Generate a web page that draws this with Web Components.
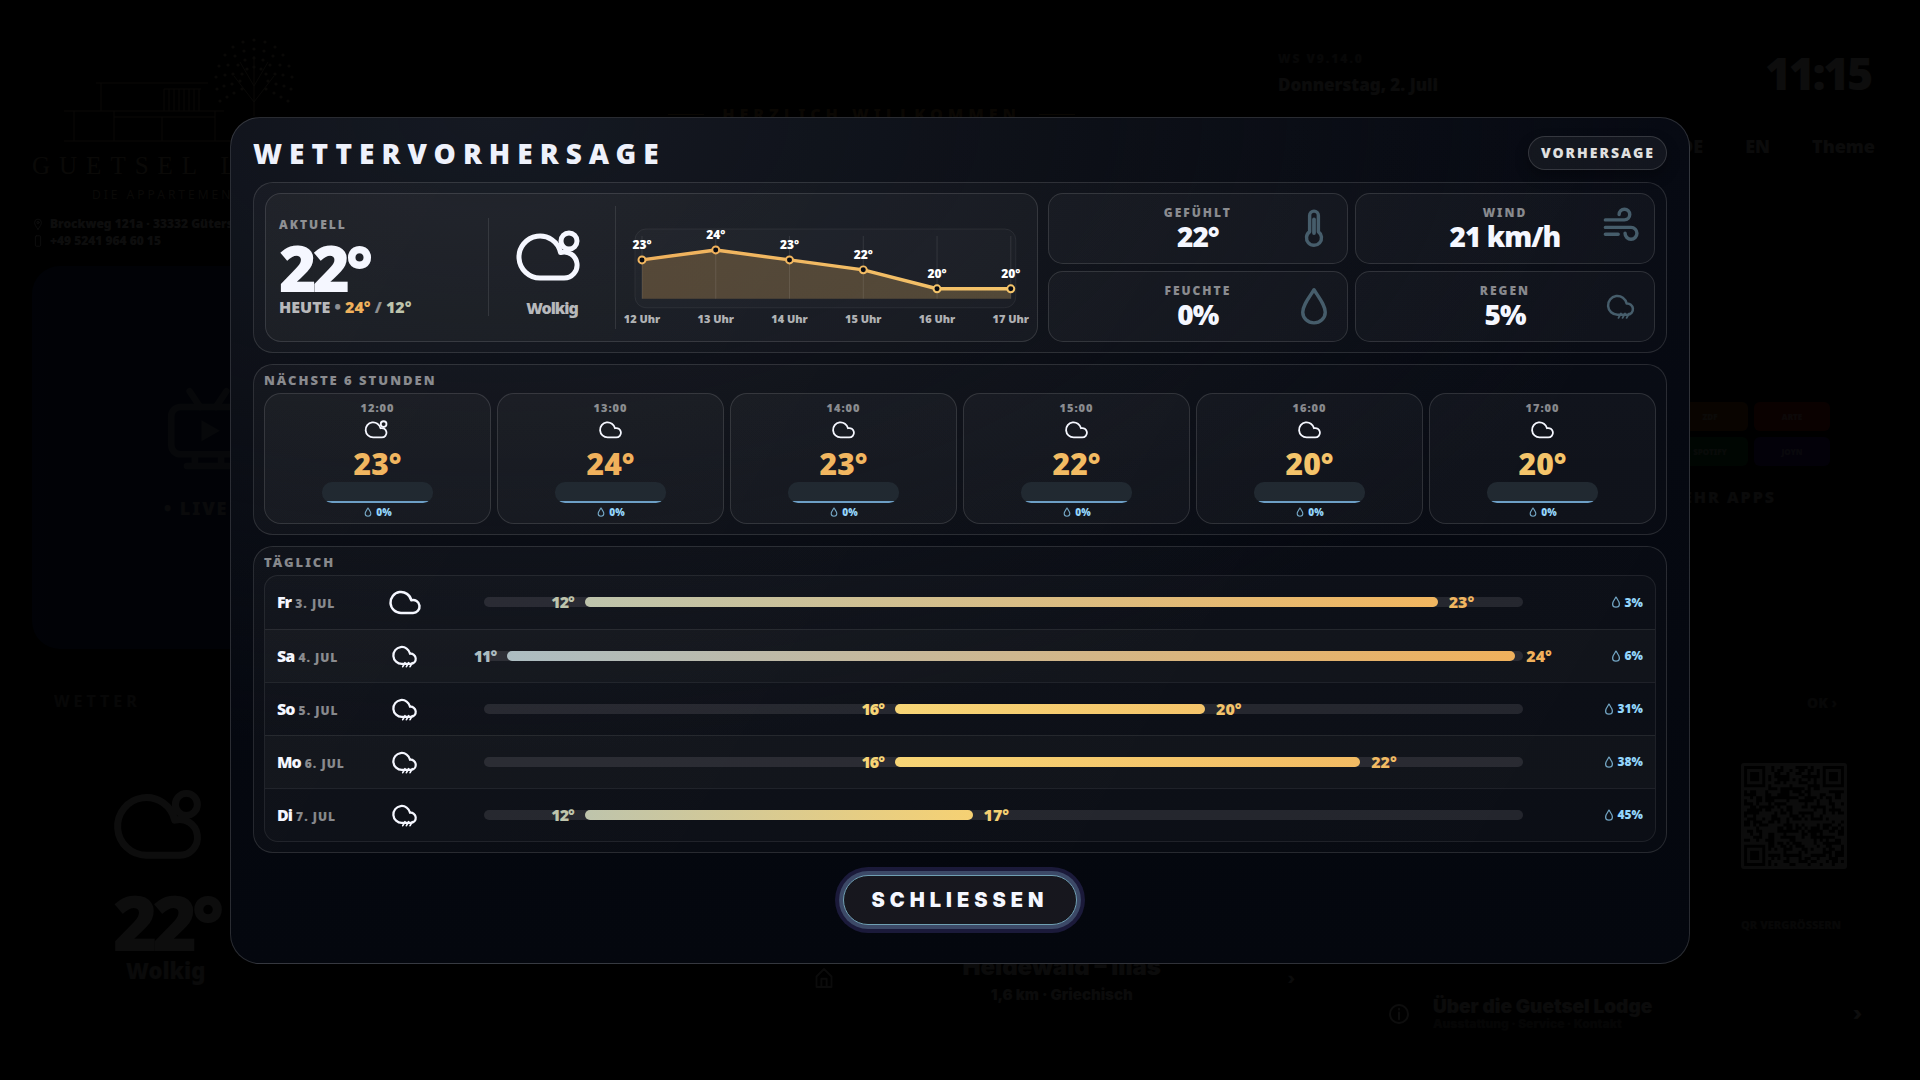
<!DOCTYPE html>
<html lang="de">
<head>
<meta charset="utf-8">
<meta name="viewport" content="width=device-width, initial-scale=1">
<title>Wettervorhersage</title>
<style>
  * { box-sizing: border-box; }
  body {
    margin: 0;
    min-height: 100vh;
    background: #000;
    color: #f5f7ff;
    font-family: "Noto Sans", "Open Sans", sans-serif;
    font-weight: 900;
  }
</style>
</head>
<body>
<lodge-app></lodge-app>

<script>
const CLOUD = 'M24 54A21 21 0 1 1 44.5 28.5A13 13 0 1 1 48 54Z'

const ICONS = {
  cloud: `<path d="${CLOUD}"/>`,
  partly: `<g transform="translate(-4 0)"><path d="${CLOUD}"/><circle cx="53" cy="17" r="8"/></g>`,
  rain: `
    <path stroke-width="4" d="M26.5 46A15 15 0 1 1 41 28A9 9 0 1 1 43 46Z"/>
    <path stroke-width="3" d="M32 44l-4 7M38.5 44l-4 7M45 44l-4 7"/>`,
  drop: '<path d="M32 6C23 20 14 31 14 42a18 17 0 0 0 36 0C50 31 41 20 32 6Z"/>',
  thermo: '<path d="M25 38V12a7 7 0 0 1 14 0v26a12 12 0 1 1-14 0Z"/><path d="M32 18V40" stroke-width="6"/>',
  wind: '<path d="M7 19H37.5a8.5 8.5 0 1 0-8.5-8.5M7 31H48a9.5 9.5 0 1 1-9.5 9.5M7 42H27.5"/>',
  tv: '<rect x="4" y="16" width="56" height="36" rx="7"/><path d="M18 4l8 12M46 4l-8 12M22 52v9M42 52v9M16 61h32"/><path d="M27 26v16l14-8z" fill="currentColor" stroke="none"/>',
  house: '<path d="M12 28L32 8l20 20v28H12zM25 56V34h14v22"/>',
  info: '<circle cx="32" cy="32" r="24"/><path d="M32 28v18M32 18v2"/>',
  pin: '<path d="M32 60C20 44 14 34 14 24a18 18 0 0 1 36 0c0 10-6 20-18 36z"/><circle cx="32" cy="24" r="6"/>',
  phone: '<rect x="18" y="4" width="28" height="56" rx="6"/>',
}

// temperature -> colour, cool grey-blue through yellow to orange
const TEMP_COLOURS = [
  [11, [172, 189, 194]],
  [12, [190, 196, 172]],
  [16, [247, 213, 118]],
  [20, [244, 196, 106]],
  [24, [240, 177, 92]],
]

const tempColour = t => {
  let i = 0
  while (i < TEMP_COLOURS.length - 2 && t > TEMP_COLOURS[i + 1][0]) i++
  const [t0, c0] = TEMP_COLOURS[i]
  const [t1, c1] = TEMP_COLOURS[i + 1]
  const f = Math.min(1, Math.max(0, (t - t0) / (t1 - t0)))
  return `rgb(${c0.map((c, n) => Math.round(c + (c1[n] - c) * f)).join(',')})`
}

class BaseElement extends HTMLElement {
  constructor() {
    super()
    this.attachShadow({ mode: 'open' })
  }
  connectedCallback() {
    this.shadowRoot.innerHTML = `
      <style>
        *, :host { box-sizing: border-box; }
        ${this.css}
      </style>
      ${this.html}
    `
  }
  attr(name) {
    return this.getAttribute(name) || ''
  }
  num(name) {
    return Number(this.getAttribute(name)) || 0
  }
}

class WeatherIcon extends BaseElement {
  get css() {
    return `
      :host { display: block; width: var(--size, 24px); height: var(--size, 24px); flex: none; }
      svg { display: block; width: 100%; height: 100%; overflow: visible; }
    `
  }
  get html() {
    return `
      <svg viewBox="0 0 64 64" fill="none" stroke="currentColor" stroke-width="${this.attr('stroke') || 5}"
        stroke-linecap="round" stroke-linejoin="round" aria-hidden="true">${ICONS[this.attr('name')]}</svg>
    `
  }
}

class WeatherPanel extends BaseElement {
  get css() {
    return `
      :host {
        display: block;
        padding: 10px;
        border: 1px solid rgba(255, 255, 255, .12);
        border-radius: 20px;
        background: linear-gradient(120deg, rgba(255, 250, 240, .03), rgba(255, 255, 255, .015));
      }
      h2 {
        margin: 0 0 8px;
        font-size: 13px;
        line-height: 10px;
        font-weight: 900;
        letter-spacing: 2px;
        color: rgba(255, 255, 255, .5);
      }
    `
  }
  get html() {
    return `${this.attr('heading') ? `<h2>${this.attr('heading')}</h2>` : ''}<slot></slot>`
  }
}

class TempChart extends BaseElement {
  get css() {
    return `
      :host { display: block; }
      svg { display: block; width: 100%; overflow: visible; }
      .temp { font-size: 12px; fill: #fff; text-anchor: middle; }
      .hour { font-size: 11px; fill: rgba(255, 255, 255, .68); text-anchor: middle; }
    `
  }
  get html() {
    const temps = this.attr('temps').split(',').map(Number)
    const first = this.num('first-hour')
    const points = temps.map((t, i) => ({ t, x: 8 + i * 74, y: Math.round(22 + (24 - t) * 9.8), hour: first + i }))
    const line = points.map(p => `${p.x},${p.y}`).join(' ')
    const last = points[points.length - 1]
    return `
      <svg viewBox="0 0 384 96" role="img" aria-label="Temperaturverlauf">
        <defs>
          <linearGradient id="line" x1="0" x2="1" y1="0" y2="0">
            <stop offset="0" stop-color="${tempColour(24)}"/>
            <stop offset="1" stop-color="${tempColour(20)}"/>
          </linearGradient>
        </defs>
        <rect x="1" y="1" width="382" height="79" rx="11" fill="rgba(255,255,255,.02)" stroke="rgba(255,255,255,.07)"/>
        <polygon points="8,71 ${line} ${last.x},71" fill="url(#line)" fill-opacity=".25"/>
        ${points.map(p => `<path d="M${p.x} 8V71" stroke="rgba(255,255,255,.1)"/>`).join('')}
        <polyline points="${line}" fill="none" stroke="url(#line)" stroke-width="3.5" stroke-linejoin="round"/>
        ${points.map(p => `
          <circle cx="${p.x}" cy="${p.y}" r="3.5" fill="#070a12" stroke="${tempColour(p.t)}" stroke-width="2"/>
          <text class="temp" x="${p.x}" y="${p.y - 11}">${p.t}°</text>
          <text class="hour" x="${p.x}" y="95">${p.hour} Uhr</text>
        `).join('')}
      </svg>
    `
  }
}

class CurrentCard extends BaseElement {
  get css() {
    return `
      :host {
        display: grid;
        grid-template-columns: 222px 127px 1fr;
        align-items: center;
        border: 1px solid rgba(255, 255, 255, .12);
        border-radius: 16px;
        background: linear-gradient(120deg, rgba(255, 246, 228, .035), rgba(255, 255, 255, .03));
      }
      .now { padding: 1px 0 0 13px; height: 98px; }
      .label { font-size: 12px; line-height: 12px; letter-spacing: 2px; color: rgba(255, 255, 255, .5); }
      .temp { margin-top: 10px; font-size: 64px; line-height: 54px; letter-spacing: -4px; }
      .today { margin-top: 4px; font-size: 16px; line-height: 16px; color: rgba(255, 255, 255, .7); white-space: nowrap; }
      .sep { color: rgba(255, 255, 255, .5); }
      .sky {
        display: flex;
        flex-direction: column;
        align-items: center;
        gap: 10px;
        height: 98px;
        padding-top: 6px;
        border-left: 1px solid rgba(255, 255, 255, .1);
      }
      .sky weather-icon { --size: 64px; }
      .sky span { font-size: 16px; line-height: 20px; letter-spacing: -1px; color: rgba(255, 255, 255, .7); }
      .chart {
        display: flex;
        align-items: center;
        height: 123px;
        padding: 17px 20px 0 18px;
        border-left: 1px solid rgba(255, 255, 255, .1);
      }
      ::slotted(temp-chart) { flex: 1; }
    `
  }
  get html() {
    return `
      <div class="now">
        <div class="label">AKTUELL</div>
        <div class="temp">${this.attr('temp')}°</div>
        <div class="today">HEUTE <span class="sep">•</span>
          <span style="color:${tempColour(this.num('high'))}">${this.attr('high')}°</span>
          <span class="sep">/</span>
          <span style="color:${tempColour(this.num('low'))}">${this.attr('low')}°</span></div>
      </div>
      <div class="sky">
        <weather-icon name="partly"></weather-icon>
        <span>${this.attr('sky')}</span>
      </div>
      <div class="chart"><slot></slot></div>
    `
  }
}

class MetricCard extends BaseElement {
  get css() {
    return `
      :host {
        position: relative;
        display: flex;
        flex-direction: column;
        justify-content: center;
        align-items: center;
        gap: 2px;
        padding: 2px 0 0;
        border: 1px solid rgba(255, 255, 255, .12);
        border-radius: 15px;
        background: rgba(255, 255, 255, .03);
      }
      .label { font-size: 12px; line-height: 12px; letter-spacing: 2px; color: rgba(255, 255, 255, .5); }
      .value { font-size: 28px; line-height: 30px; letter-spacing: -1px; }
      weather-icon {
        --size: 40px;
        position: absolute;
        right: 13px;
        top: calc(50% - 20px);
        color: #465d6b;
      }
    `
  }
  get html() {
    return `
      <div class="label">${this.attr('label')}</div>
      <div class="value">${this.attr('value')}</div>
      <weather-icon name="${this.attr('icon')}" stroke="5.5"></weather-icon>
    `
  }
}

class RainChance extends BaseElement {
  get css() {
    return `
      :host { display: flex; align-items: center; justify-content: flex-end; gap: 3px; color: #93d5fb; }
      weather-icon { --size: 1em; opacity: .75; }
    `
  }
  get html() {
    return '<weather-icon name="drop" stroke="7"></weather-icon><span><slot></slot></span>'
  }
}

class HourCard extends BaseElement {
  get css() {
    return `
      :host {
        display: flex;
        flex-direction: column;
        align-items: center;
        padding: 8px 0 5px;
        border: 1px solid rgba(255, 255, 255, .12);
        border-radius: 17px;
        background: linear-gradient(180deg, rgba(255, 255, 255, .035), rgba(255, 250, 240, .03));
      }
      .time { font-size: 11px; line-height: 12px; letter-spacing: 1px; color: rgba(255, 255, 255, .5); }
      weather-icon { --size: 23px; margin-top: 4px; }
      .temp { margin-top: 8px; font-size: 30px; line-height: 30px; }
      .bar {
        width: 49%;
        height: 21px;
        margin-top: 3px;
        border-radius: 10px;
        overflow: hidden;
        display: flex;
        align-items: flex-end;
        background: #212931;
      }
      .bar div { width: 100%; height: 2px; background: #6d9fc6; }
      rain-chance { margin-top: 3px; font-size: 10px; line-height: 12px; }
    `
  }
  get html() {
    return `
      <div class="time">${this.attr('time')}</div>
      <weather-icon name="${this.attr('icon')}"></weather-icon>
      <div class="temp" style="color:${tempColour(this.num('temp'))}">${this.attr('temp')}°</div>
      <div class="bar"><div></div></div>
      <rain-chance>${this.attr('rain')}%</rain-chance>
    `
  }
}

class DayRow extends BaseElement {
  // the scale runs a little past the coldest and warmest day
  place(t) {
    return (t - 10.7) / 13.4 * 100
  }
  get css() {
    const low = this.num('low')
    const high = this.num('high')
    return `
      :host {
        display: grid;
        grid-template-columns: 100px 56px 1fr 80px;
        align-items: center;
        height: 53px;
        padding: 0 12px;
      }
      .day { font-size: 16px; letter-spacing: -1px; }
      .day small { margin-left: 1px; font-size: 12px; letter-spacing: 1px; color: rgba(255, 255, 255, .5); }
      weather-icon { --size: 32px; justify-self: center; }
      weather-icon[name="rain"] { --size: 36px; }
      .track {
        position: relative;
        height: 10px;
        margin: 0 40px 0 51px;
        border-radius: 5px;
        background: rgba(255, 245, 255, .1);
      }
      .range {
        position: absolute;
        left: ${this.place(low)}%;
        right: ${100 - this.place(high)}%;
        height: 10px;
        border-radius: 5px;
        background: linear-gradient(90deg, ${tempColour(low)}, ${tempColour(high)});
      }
      .low, .high { position: absolute; top: -6px; font-size: 16px; line-height: 22px; }
      .low { right: 100%; margin-right: 11px; letter-spacing: -1px; color: ${tempColour(low)}; }
      .high { left: 100%; margin-left: 11px; color: ${tempColour(high)}; }
      rain-chance { font-size: 12px; }
    `
  }
  get html() {
    return `
      <div class="day">${this.attr('day')} <small>${this.attr('date')}</small></div>
      <weather-icon name="${this.attr('icon')}"></weather-icon>
      <div class="track"><div class="range">
        <span class="low">${this.attr('low')}°</span>
        <span class="high">${this.attr('high')}°</span>
      </div></div>
      <rain-chance>${this.attr('rain')}%</rain-chance>
    `
  }
}

class ForecastDialog extends BaseElement {
  get css() {
    return `
      :host {
        display: block;
        width: min(1460px, 94vw);
        padding: 18px 22px 38px;
        border: 1px solid rgba(255, 255, 255, .15);
        border-radius: 30px;
        background:
          radial-gradient(ellipse 80% 75% at 18% 0%, #151922, rgba(15, 18, 25, .7) 50%, transparent),
          linear-gradient(180deg, #070a13, #04070e);
      }
      header { display: flex; align-items: center; justify-content: space-between; height: 34px; }
      h1 { margin: 0; font-size: 28px; line-height: 34px; font-weight: 900; letter-spacing: 7px; color: #eef1fb; }
      .badge {
        padding: 0 11px 0 12px;
        border: 1px solid rgba(255, 255, 255, .14);
        border-radius: 17px;
        background: rgba(255, 255, 255, .05);
        box-shadow: 0 6px 14px rgba(0, 0, 0, .3);
        font-size: 14px;
        line-height: 32px;
        letter-spacing: 2px;
        color: #e0e0e0;
      }
      main { display: grid; gap: 11px; margin-top: 12px; }
      .top { display: grid; grid-template-columns: 56fr 44fr; gap: 10px; padding: 0 1px; }
      .metrics { display: grid; grid-template-columns: 1fr 1fr; grid-auto-rows: 71px; gap: 7px; }
      .hours { display: grid; grid-template-columns: repeat(6, 1fr); gap: 6px; }
      .days {
        border: 1px solid rgba(255, 255, 255, .08);
        border-radius: 14px;
        overflow: hidden;
        background: rgba(255, 255, 255, .02);
      }
      day-row + day-row { border-top: 1px solid rgba(255, 255, 255, .08); }
      day-row:nth-child(even) { background: rgba(255, 245, 225, .025); }
      footer { display: flex; justify-content: center; margin-top: 22px; }
      button {
        height: 50px;
        padding: 0 28px;
        border: 1px solid #6f9fb2;
        border-radius: 25px;
        outline: none;
        background: #17171e;
        box-shadow: 0 0 0 4px #3c4967, 0 0 0 8px #1b1a3a;
        color: inherit;
        font: 900 20px Inter, sans-serif;
        letter-spacing: 5px;
      }
    `
  }
  get html() {
    return `
      <header><h1>WETTERVORHERSAGE</h1><span class="badge">VORHERSAGE</span></header>
      <main>
        <weather-panel>
          <div class="top">
            <current-card temp="22" high="24" low="12" sky="Wolkig">
              <temp-chart temps="23,24,23,22,20,20" first-hour="12"></temp-chart>
            </current-card>
            <div class="metrics">
              <metric-card label="GEFÜHLT" value="22°" icon="thermo"></metric-card>
              <metric-card label="WIND" value="21 km/h" icon="wind"></metric-card>
              <metric-card label="FEUCHTE" value="0%" icon="drop"></metric-card>
              <metric-card label="REGEN" value="5%" icon="rain"></metric-card>
            </div>
          </div>
        </weather-panel>
        <weather-panel heading="NÄCHSTE 6 STUNDEN">
          <div class="hours">
            <hour-card time="12:00" icon="partly" temp="23" rain="0"></hour-card>
            <hour-card time="13:00" icon="cloud" temp="24" rain="0"></hour-card>
            <hour-card time="14:00" icon="cloud" temp="23" rain="0"></hour-card>
            <hour-card time="15:00" icon="cloud" temp="22" rain="0"></hour-card>
            <hour-card time="16:00" icon="cloud" temp="20" rain="0"></hour-card>
            <hour-card time="17:00" icon="cloud" temp="20" rain="0"></hour-card>
          </div>
        </weather-panel>
        <weather-panel heading="TÄGLICH">
          <div class="days">
            <day-row day="Fr" date="3. JUL" icon="cloud" low="12" high="23" rain="3"></day-row>
            <day-row day="Sa" date="4. JUL" icon="rain" low="11" high="24" rain="6"></day-row>
            <day-row day="So" date="5. JUL" icon="rain" low="16" high="20" rain="31"></day-row>
            <day-row day="Mo" date="6. JUL" icon="rain" low="16" high="22" rain="38"></day-row>
            <day-row day="Di" date="7. JUL" icon="rain" low="12" high="17" rain="45"></day-row>
          </div>
        </weather-panel>
      </main>
      <footer><button type="button">SCHLIESSEN</button></footer>
    `
  }
}

class LodgeLogo extends BaseElement {
  get css() {
    return `
      :host { display: flex; flex-direction: column; color: #b9a98a; }
      svg { display: block; width: 240px; height: 108px; margin-left: 32px; }
      .name { margin-top: 8px; font: 400 25px/28px "Liberation Serif", serif; letter-spacing: 9px; white-space: nowrap; }
      .sub { margin: 8px 0 0 60px; font-size: 12px; line-height: 14px; font-weight: 400; letter-spacing: 3px; white-space: nowrap; }
    `
  }
  get leaves() {
    let out = ''
    for (let ring = 0; ring < 4; ring++) {
      for (let i = 0; i < 9 + ring * 2; i++) {
        const a = Math.PI * (.85 + 1.3 * i / (8 + ring * 2))
        const r = 14 + ring * 8
        out += `<circle cx="${Math.round(190 + Math.cos(a) * r)}" cy="${Math.round(46 + Math.sin(a) * r * 1.1)}" r="1.6"/>`
      }
    }
    return out
  }
  get html() {
    return `
      <svg viewBox="0 0 240 108" fill="none" stroke="currentColor" aria-hidden="true">
        <path d="M32 47h112M37 47v28M0 75h160M10 75v30M50 75v30M-4 105h172M98 81v24M151 75v30M50 81h101"/>
        <path d="M100 53v22M105 53v22M110 53v22M115 53v22M120 53v22M125 53v22M130 53v22M135 53v22M100 53h37"/>
        <path d="M190 80V20M190 66l-20-26M190 66l20-26M190 50l-14-24M190 50l14-24"/>
        <g fill="currentColor" stroke="none">${this.leaves}</g>
      </svg>
      <div class="name">GUETSEL LODGE</div>
      <div class="sub">DIE APPARTEMENTS</div>
    `
  }
}

class QrCode extends BaseElement {
  get css() {
    return `
      :host { display: block; width: 106px; height: 106px; }
      svg { display: block; width: 100%; height: 100%; }
    `
  }
  get cells() {
    const n = 33
    let seed = 7
    let path = ''
    for (let y = 0; y < n; y++) {
      for (let x = 0; x < n; x++) {
        seed = (seed * 1103515245 + 12345) % 2147483648
        const finder = (x < 8 && y < 8) || (x > n - 9 && y < 8) || (x < 8 && y > n - 9)
        if (!finder && seed > 1073741824) path += `M${x} ${y}h1v1h-1z`
      }
    }
    return path
  }
  get html() {
    const finder = (x, y) => `<path d="M${x} ${y}h7v7h-7zm1 1v5h5v-5zm1 1h3v3h-3z" fill-rule="evenodd"/>`
    return `
      <svg viewBox="-1 -1 35 35" aria-hidden="true">
        <rect x="-1" y="-1" width="35" height="35" rx="1" fill="#fff"/>
        <g fill="#111"><path d="${this.cells}"/>${finder(0, 0)}${finder(26, 0)}${finder(0, 26)}</g>
      </svg>
    `
  }
}

// the start screen that stays visible behind the dialog
class LodgeHome extends BaseElement {
  get css() {
    return `
      :host { display: flex; flex-direction: column; gap: 16px; padding: 36px 32px 32px; height: 100%; color: #fff; }
      .row { display: flex; gap: 16px; flex: 1; min-height: 0; }
      .head { display: flex; height: 214px; }
      .card { border-radius: 28px; background: rgba(255, 255, 255, .05); padding: 22px; }
      .left { width: 450px; }
      .contact { display: flex; align-items: center; gap: 6px; margin-top: 1px; font-size: 12px; line-height: 16px; --size: 12px; }
      .contact:first-of-type { margin-top: 14px; }
      .welcome {
        display: flex;
        flex: 1;
        align-items: center;
        justify-content: center;
        gap: 18px;
        height: 16px;
        margin-top: 70px;
        font-size: 16px;
        letter-spacing: 5px;
        color: #b9823f;
      }
      .welcome i { width: 36px; height: 1px; background: currentColor; }
      .right { width: 627px; }
      .clock { display: flex; align-items: center; justify-content: space-between; height: 74px; padding: 0 17px; }
      .clock small { display: block; font-size: 12px; letter-spacing: 2px; line-height: 16px; opacity: .5; }
      .clock p { margin: 8px 0 0; font-size: 17px; line-height: 20px; opacity: .8; }
      .clock b { font-size: 44px; font-weight: 900; letter-spacing: -2px; }
      nav { display: flex; justify-content: flex-end; gap: 42px; margin-top: 24px; padding-right: 13px; font-size: 18px; line-height: 24px; opacity: .8; }
      .tv { flex: 1; display: flex; flex-direction: column; align-items: flex-start; background: linear-gradient(90deg, #143680, #101d40); }
      .tv weather-icon { --size: 84px; margin: 98px 0 0 112px; opacity: .5; }
      .tv span { margin: 26px 0 0 110px; font-size: 18px; letter-spacing: 2px; opacity: .7; }
      .apps { width: 627px; display: flex; flex-direction: column; align-items: flex-end; padding: 136px 58px 0 0; }
      .tiles { display: grid; grid-template-columns: 76px 76px; grid-auto-rows: 29px; gap: 6px; font-size: 8px; }
      .tiles span { display: grid; place-items: center; border-radius: 6px; color: rgba(255, 255, 255, .6); }
      .apps p { margin: 20px 54px 0 0; font-size: 16px; line-height: 22px; letter-spacing: 2px; opacity: .7; }
      .weather { width: 718px; display: flex; flex-direction: column; align-items: flex-start; }
      .weather h3 { margin: 4px 0 0; font-size: 16px; line-height: 20px; letter-spacing: 4px; opacity: .5; }
      .weather weather-icon { --size: 88px; margin: 70px 0 0 65px; }
      .weather b { margin: 18px 0 0 59px; font-size: 76px; line-height: 70px; font-weight: 900; letter-spacing: -5px; }
      .weather span { margin: 0 0 0 72px; font-size: 22px; line-height: 26px; opacity: .7; }
      .food { flex: 1; display: flex; align-items: center; padding: 0 50px 0 46px; font-family: Inter, sans-serif; opacity: .8; align-self: flex-end; height: 140px; }
      .food div { flex: 1; text-align: center; font-size: 24px; line-height: 34px; }
      .food small { display: block; font-size: 15px; line-height: 22px; }
      .side { width: 527px; display: flex; flex-direction: column; gap: 16px; }
      .qr { flex: 1; display: flex; flex-direction: column; align-items: flex-end; padding-right: 41px; }
      .qr p { margin: 6px 10px 50px; font-size: 14px; line-height: 20px; opacity: .5; }
      .qr qr-code { opacity: .9; }
      .qr small { margin: 48px 6px 0; font-size: 11px; line-height: 16px; opacity: .5; }
      .about { display: flex; align-items: center; gap: 22px; height: 69px; padding: 0 26px; font-family: Inter, sans-serif; font-size: 19px; }
      .about weather-icon { --size: 24px; }
      .about div { flex: 1; line-height: 20px; opacity: .8; }
      .about small { display: block; font-size: 12px; line-height: 14px; opacity: .5; }
    `
  }
  get html() {
    return `
      <div class="head">
        <div class="left">
          <lodge-logo></lodge-logo>
          <div class="contact"><weather-icon name="pin"></weather-icon>Brockweg 121a · 33332 Gütersloh</div>
          <div class="contact"><weather-icon name="phone"></weather-icon>+49 5241 964 60 15</div>
        </div>
        <div class="welcome"><i></i>HERZLICH WILLKOMMEN<i></i></div>
        <div class="right">
          <div class="card clock"><div><small>WS V9.14.0</small><p>Donnerstag, 2. Juli</p></div><b>11:15</b></div>
          <nav><span>DE</span><span>EN</span><span>Theme</span></nav>
        </div>
      </div>
      <div class="row">
        <div class="card tv"><weather-icon name="tv"></weather-icon><span>• LIVE</span></div>
        <div class="card apps">
          <div class="tiles">
            <span style="background:#a85a10">ZDF</span><span style="background:#c01c10">ARTE</span>
            <span style="background:#0f7a2c">SPOTIFY</span><span style="background:#3a1cb0">JOYN</span>
          </div>
          <p>MEHR APPS</p>
        </div>
      </div>
      <div class="row">
        <div class="card weather">
          <h3>WETTER</h3>
          <weather-icon name="partly"></weather-icon>
          <b>22°</b>
          <span>Wolkig</span>
        </div>
        <div class="food">
          <weather-icon name="house"></weather-icon>
          <div>Heidewald – Ilias<small>1,6 km · Griechisch</small></div>
          <span>›</span>
        </div>
        <div class="side">
          <div class="card qr"><p>OK ›</p><qr-code></qr-code><small>QR VERGRÖSSERN</small></div>
          <div class="card about">
            <weather-icon name="info"></weather-icon>
            <div>Über die Guetsel Lodge<small>Ausstattung · Service · Kontakt</small></div>
            <span>›</span>
          </div>
        </div>
      </div>
    `
  }
}

class LodgeApp extends BaseElement {
  get css() {
    return `
      :host { display: grid; min-height: 100vh; }
      lodge-home, .scrim { grid-area: 1 / 1; min-width: 0; }
      .scrim {
        z-index: 1;
        display: grid;
        place-items: center;
        background: rgba(0, 0, 0, .95);
      }
    `
  }
  get html() {
    return `
      <lodge-home></lodge-home>
      <div class="scrim"><forecast-dialog role="dialog" aria-label="Wettervorhersage"></forecast-dialog></div>
    `
  }
}

customElements.define('weather-icon', WeatherIcon)
customElements.define('weather-panel', WeatherPanel)
customElements.define('temp-chart', TempChart)
customElements.define('current-card', CurrentCard)
customElements.define('metric-card', MetricCard)
customElements.define('rain-chance', RainChance)
customElements.define('hour-card', HourCard)
customElements.define('day-row', DayRow)
customElements.define('forecast-dialog', ForecastDialog)
customElements.define('lodge-logo', LodgeLogo)
customElements.define('qr-code', QrCode)
customElements.define('lodge-home', LodgeHome)
customElements.define('lodge-app', LodgeApp)
</script>
</body>
</html>
